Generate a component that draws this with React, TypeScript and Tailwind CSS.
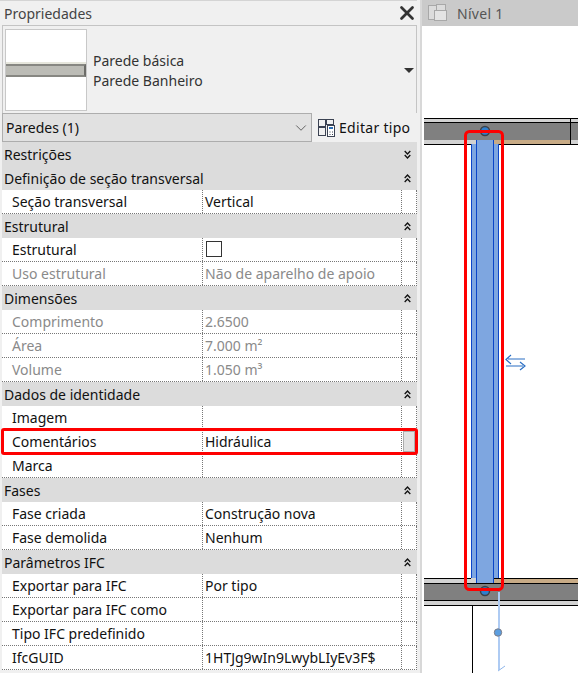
import { Fragment } from 'react';
import { X, ChevronDown } from 'lucide-react';

type Row = { label: string; value?: string; dim?: boolean; check?: boolean; edit?: boolean };
type Section = { title: string; open?: boolean; rows: Row[] };

const SECTIONS: Section[] = [
  { title: 'Restrições', open: false, rows: [] },
  { title: 'Definição de seção transversal', rows: [{ label: 'Seção transversal', value: 'Vertical' }] },
  {
    title: 'Estrutural',
    rows: [
      { label: 'Estrutural', check: true },
      { label: 'Uso estrutural', value: 'Não de aparelho de apoio', dim: true },
    ],
  },
  {
    title: 'Dimensões',
    rows: [
      { label: 'Comprimento', value: '2.6500', dim: true },
      { label: 'Área', value: '7.000 m²', dim: true },
      { label: 'Volume', value: '1.050 m³', dim: true },
    ],
  },
  {
    title: 'Dados de identidade',
    rows: [{ label: 'Imagem' }, { label: 'Comentários', value: 'Hidráulica', edit: true }, { label: 'Marca' }],
  },
  {
    title: 'Fases',
    rows: [
      { label: 'Fase criada', value: 'Construção nova' },
      { label: 'Fase demolida', value: 'Nenhum' },
    ],
  },
  {
    title: 'Parâmetros IFC',
    rows: [
      { label: 'Exportar para IFC', value: 'Por tipo' },
      { label: 'Exportar para IFC como' },
      { label: 'Tipo IFC predefinido' },
      { label: 'IfcGUID', value: '1HTJg9wIn9LwybLIyEv3F$' },
    ],
  },
];

function Chevrons({ open = true }: { open?: boolean }) {
  return (
    <svg width="7" height="9" viewBox="0 0 7 9" fill="none" stroke="#111" strokeWidth="1.3" className={open ? '' : 'rotate-180'}>
      <path d="M0.7 4 L3.5 1 L6.3 4" />
      <path d="M0.7 8 L3.5 5 L6.3 8" />
    </svg>
  );
}

function EditTypeIcon() {
  return (
    <svg width="17" height="18" viewBox="0 0 17 18" fill="none" stroke="#3b4252" strokeWidth="1">
      <rect x="0.5" y="0.5" width="7" height="7" />
      <rect x="8.5" y="0.5" width="7" height="5" />
      <rect x="0.5" y="8.5" width="7" height="8" />
      <rect x="9.5" y="6.5" width="7" height="11" fill="#fff" />
      <rect x="11" y="8" width="4" height="2" fill="#2d6fb5" stroke="none" />
      <path d="M11.5 13h1M14 13h1M11.5 15.5h1M14 15.5h1" />
    </svg>
  );
}

function PropRow({ row }: { row: Row }) {
  const text = row.dim ? 'text-[#8a8a8a]' : 'text-[#111]';
  return (
    <div className="grid h-6 grid-cols-[201px_199px_1fr] bg-white border-b border-r border-dotted border-[#777] text-[14px] leading-[23px]">
      <div className={`pl-[10px] border-r border-dotted border-[#777] whitespace-nowrap ${text}`}>{row.label}</div>
      <div className={`pl-[2px] border-r border-dotted border-[#777] whitespace-nowrap ${text}`}>
        {row.value}
        {row.check && <div className="ml-px mt-[3px] h-4 w-4 border border-[#333] bg-white" />}
      </div>
      <div className="py-px pl-px">
        {row.edit && <div className="h-[21px] w-[12px] border border-[#adadad] bg-[#e1e1e1]" />}
      </div>
    </div>
  );
}

function WallPlan() {
  return (
    <svg width="156" height="647" viewBox="422 26 156 647" className="block" shapeRendering="crispEdges">
      {/* upper wall */}
      <rect x="424" y="118" width="154" height="27" fill="#d2d2d2" />
      <rect x="424" y="122" width="154" height="18" fill="#808080" />
      <rect x="494" y="140" width="76" height="4" fill="#c8ab86" />
      <path d="M424 118.5H578M424 122.5H578M424 144.5H471M494 144.5H578M570.5 118V145M570 122.5H578" stroke="#000" fill="none" />
      {/* lower wall */}
      <rect x="424" y="578" width="154" height="27" fill="#d2d2d2" />
      <rect x="424" y="583" width="154" height="18" fill="#808080" />
      <rect x="494" y="579" width="84" height="4" fill="#c8ab86" />
      <path d="M424 578.5H471M494 578.5H578M424 583.5H578M424 600.5H578M424 605.5H578M472.5 605V673" stroke="#000" fill="none" />
      {/* selected wall */}
      <rect x="471" y="144" width="28" height="434" fill="#7ea6e0" />
      <rect x="477" y="140" width="16" height="443" fill="#7ea6e0" />
      <path d="M471.5 144V578M476.5 140V583M493.5 140V583M498.5 144V578" stroke="#0b46c8" fill="none" />
      {/* reference line */}
      <path d="M498.5 592V670" stroke="#aecbf3" strokeWidth="2" fill="none" />
      <g shapeRendering="auto">
        <path d="M498 671L505 666" stroke="#8fb6ea" fill="none" />
        <circle cx="498" cy="632.5" r="3.7" fill="#5b9ee0" stroke="#7c7c86" />
        <circle cx="485" cy="131" r="4.5" fill="#2f7fce" stroke="#3c4148" strokeWidth="1.5" />
        <circle cx="485" cy="591" r="4.5" fill="#2f7fce" stroke="#3c4148" strokeWidth="1.5" />
        {/* highlight */}
        <rect x="465.5" y="131.5" width="37" height="458" rx="4" fill="none" stroke="#fe0000" strokeWidth="3" />
        {/* flip control */}
        <path d="M525 359H508M511 355L506 359.5L511 364M506 366H523M520 362L525 366L520 370" fill="none" stroke="#2a6fc4" strokeWidth="1.2" />
      </g>
    </svg>
  );
}

export default function App() {
  return (
    <div className="relative flex h-[673px] w-[578px] overflow-hidden bg-[#f0f0f0] font-['Noto_Sans',sans-serif] text-[14px]">
      <div className="w-[417px] shrink-0 border-t border-[#d4d4d4] pl-[2px]">
        <div className="flex h-6 items-center justify-between pl-[2px] text-[#444]">
          <span>Propriedades</span>
          <X size={22} strokeWidth={3} className="mr-[-1px] text-[#333]" />
        </div>

        <div className="flex h-[88px] items-center border border-b-0 border-[#c4c4c4] pl-[2px] pr-[2px]">
          <div className="flex h-[82px] w-[82px] flex-col justify-center border border-[#c8c8c8] bg-white">
            <div className="h-[2px] bg-[#e6e6dc]" />
            <div className="border-y-2 border-r-2 border-y-[#878782] border-r-[#6c6c68] bg-[#bcbcb6] h-[13px]" />
          </div>
          <div className="ml-[6px] mt-[2px] flex-1 leading-5 text-[#333]">
            <div>Parede básica</div>
            <div>Parede Banheiro</div>
          </div>
          <div className="mt-[2px] h-0 w-0 border-x-[5px] border-t-[5px] border-x-transparent border-t-[#333]" />
        </div>

        <div className="flex h-[29px] items-center bg-[#f0f0f0]">
          <div className="flex h-[29px] w-[310px] items-center justify-between border border-[#adadad] bg-[#e1e1e1] pl-[3px] pr-px text-[#111]">
            <span>Paredes (1)</span>
            <ChevronDown size={18} strokeWidth={1.2} className="text-[#555]" />
          </div>
          <div className="ml-[6px] flex items-center gap-[4px] text-[#111]">
            <EditTypeIcon />
            <span className="tracking-[0.3px]">Editar tipo</span>
          </div>
        </div>

        <div>
          {SECTIONS.map(s => (
            <Fragment key={s.title}>
              <div className="flex h-6 items-center justify-between bg-[#dcdcdc] pl-[2px] pr-[6px] text-[#111]">
                <span>{s.title}</span>
                <Chevrons open={s.open !== false} />
              </div>
              {s.rows.map(r => (
                <PropRow key={r.label} row={r} />
              ))}
            </Fragment>
          ))}
        </div>
      </div>

      <div className="w-[3px] shrink-0 bg-[#f0f0f0]" />

      <div className="flex-1 border-l-2 border-[#d8d8d8] bg-white">
        <div className="flex h-[26px] items-center gap-[9px] bg-[#cacaca] pl-[6px] text-[#555]">
          <svg width="20" height="18" viewBox="0 0 20 18" fill="none" stroke="#a8a8a8">
            <rect x="0.5" y="1.5" width="11" height="14" fill="#dcdcdc" />
            <rect x="8.5" y="0.5" width="9" height="6" fill="#dcdcdc" />
            <rect x="6.5" y="6.5" width="12" height="10" fill="#e4e4e4" />
          </svg>
          <span className="tracking-[0.3px]">Nível 1</span>
        </div>
        <WallPlan />
      </div>

      {/* red highlight over the Comentários row */}
      <div className="absolute left-px top-[428px] h-[27px] w-[417px] rounded-[3px] border-[3px] border-[#fe0000]" />
    </div>
  );
}
